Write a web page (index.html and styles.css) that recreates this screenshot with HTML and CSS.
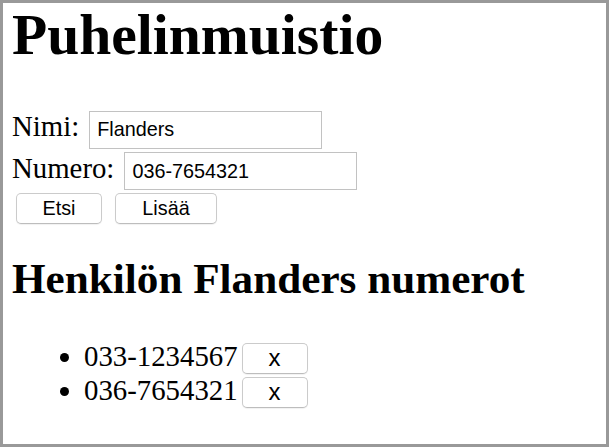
FILE: index.html
```html
<!DOCTYPE html>
<html lang="fi">
<head>
<meta charset="utf-8">
<title>Puhelinmuistio</title>
<link rel="stylesheet" href="styles.css">
</head>
<body>
<div class="frame">
  <h1 class="title">Puhelinmuistio</h1>
  <form class="form">
    <div class="row">
      <label class="label" for="nimi">Nimi:</label>
      <input class="field" id="nimi" type="text" value="Flanders">
    </div>
    <div class="row">
      <label class="label" for="numero">Numero:</label>
      <input class="field" id="numero" type="text" value="036-7654321">
    </div>
    <div class="buttons">
      <button class="btn btn-etsi" type="button">Etsi</button>
      <button class="btn btn-lisaa" type="button">Lisää</button>
    </div>
  </form>
  <h2 class="subtitle">Henkilön Flanders numerot</h2>
  <ul class="numbers">
    <li class="number">033-1234567<button class="btn btn-x" type="button">x</button></li>
    <li class="number">036-7654321<button class="btn btn-x" type="button">x</button></li>
  </ul>
</div>
</body>
</html>
```
FILE: styles.css
```css
html, body {
  margin: 0;
  padding: 0;
  background: #fff;
}

.frame {
  box-sizing: border-box;
  width: 609px;
  height: 447px;
  border: 3px solid #999;
  padding: 0 0 0 9px;
  font-family: "Liberation Serif", "Times New Roman", serif;
  font-size: 28.8px;
  color: #000;
  overflow: hidden;
}

.title {
  margin: 0;
  font-size: 57.6px;
  font-weight: bold;
  line-height: 64px;
}

.form {
  margin: 43px 0 0;
  display: flex;
  flex-direction: column;
  gap: 3px;
}

.row {
  display: flex;
  align-items: baseline;
}

.label {
  line-height: 33px;
}

.field {
  margin: 0 0 0 10px;
  width: 233px;
  height: 38px;
  box-sizing: border-box;
  border: 1px solid #c2c2c2;
  border-radius: 0;
  padding: 0 7px;
  font-family: "Liberation Sans", Arial, sans-serif;
  font-size: 19.8px;
  color: #000;
  background: #fff;
  outline: none;
}

.buttons {
  display: flex;
  gap: 13px;
  padding-left: 4px;
}

.btn {
  height: 31px;
  box-sizing: border-box;
  border: 1px solid #cbcbcb;
  border-bottom-color: #bdbdbd;
  border-radius: 5px;
  background: #fff;
  box-shadow: 0 1px 1px rgba(0, 0, 0, 0.06);
  padding: 0;
  font-family: "Liberation Sans", Arial, sans-serif;
  font-size: 19.8px;
  color: #000;
  text-align: center;
}

.btn-etsi {
  width: 86px;
}

.btn-lisaa {
  width: 102px;
}

.subtitle {
  margin: 30px 0 0;
  font-size: 43.2px;
  font-weight: bold;
  line-height: 50px;
}

.numbers {
  margin: 36px 0 0;
  padding-left: 72px;
}

.number {
  line-height: 33px;
}

.btn-x {
  width: 66px;
  margin-left: 4px;
  padding-bottom: 3px;
  font-size: 24px;
  vertical-align: baseline;
}
```
